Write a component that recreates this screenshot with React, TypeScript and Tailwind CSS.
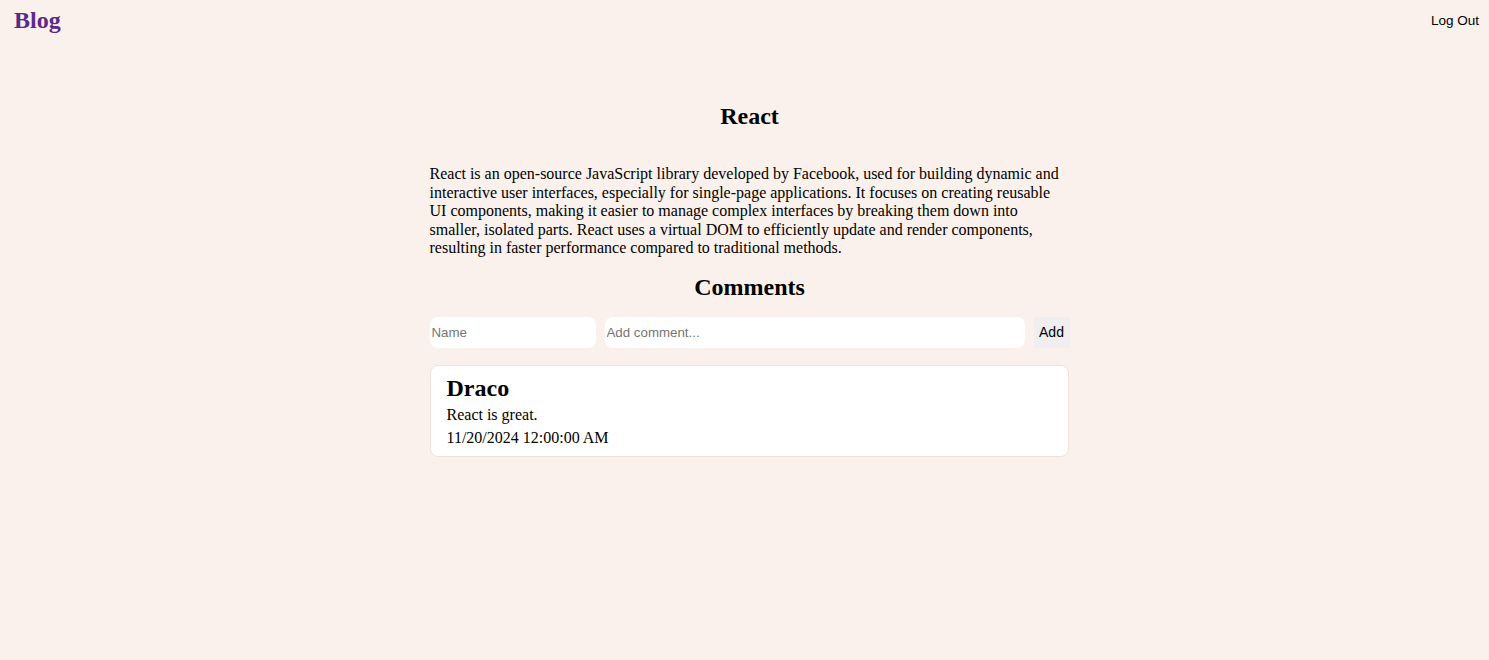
export default function App() {
  return (
    <div className="min-h-[660px] bg-[#faf1ec] text-black font-['Liberation_Serif',serif]">
      {/* Top bar */}
      <header className="flex items-start justify-between px-[14px] pt-[6px] h-[40px]">
        <span className="text-[24px] font-bold leading-[28px] text-[#5a2a8a]">Blog</span>
        <button className="text-[13.5px] leading-[24px] mt-[3px] mr-[-4px] font-['Liberation_Sans',sans-serif]">
          Log Out
        </button>
      </header>

      <main className="flex justify-center pl-[10px]">
        <div className="w-[640px] flex flex-col">
          <h2 className="mt-[62px] text-center text-[24px] font-bold leading-[28px]">React</h2>
          <p className="mt-[35px] text-[16px] leading-[18.5px]">
            React is an open-source JavaScript library developed by Facebook, used for building dynamic and
            interactive user interfaces, especially for single-page applications. It focuses on creating reusable
            UI components, making it easier to manage complex interfaces by breaking them down into
            smaller, isolated parts. React uses a virtual DOM to efficiently update and render components,
            resulting in faster performance compared to traditional methods.
          </p>
          <h2 className="mt-[15px] text-center text-[24px] font-bold leading-[28px]">Comments</h2>

          <div className="mt-[16px] flex items-center gap-[9px] font-['Liberation_Sans',sans-serif] text-[13.3px]">
            <input
              placeholder="Name"
              className="w-[166px] h-[31px] rounded-[8px] bg-white px-[2px] outline-none placeholder:text-[#757575]"
            />
            <input
              placeholder="Add comment..."
              className="flex-1 h-[31px] rounded-[8px] bg-white px-[2px] outline-none placeholder:text-[#757575]"
            />
            <button className="w-[36px] h-[31px] bg-[#f0eeee] text-[14px] text-black">Add</button>
          </div>

          <div className="mt-[17px] w-[639px] rounded-[8px] border border-[#f0e2da] bg-white px-[16px] pt-[8px] pb-[9px]">
            <h3 className="text-[24px] font-bold leading-[28px]">Draco</h3>
            <p className="mt-[4px] text-[16px] leading-[18px]">React is great.</p>
            <p className="mt-[5px] text-[16px] leading-[18px]">11/20/2024 12:00:00 AM</p>
          </div>
        </div>
      </main>
    </div>
  );
}
